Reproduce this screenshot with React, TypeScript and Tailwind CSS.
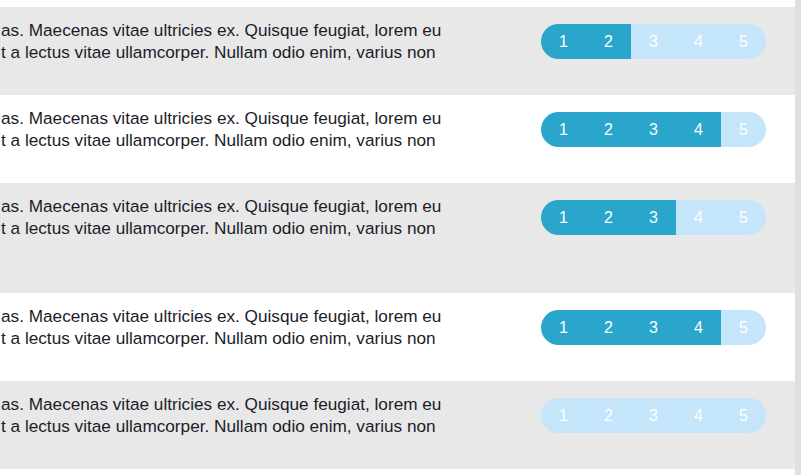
const line1 = 'as. Maecenas vitae ultricies ex. Quisque feugiat, lorem eu';
const line2 = 't a lectus vitae ullamcorper. Nullam odio enim, varius non';

const rows: { score: number; lines: number; shaded: boolean }[] = [
    { score: 2, lines: 2, shaded: true },
    { score: 4, lines: 2, shaded: false },
    { score: 3, lines: 3, shaded: true },
    { score: 4, lines: 2, shaded: false },
    { score: 0, lines: 2, shaded: true },
];

function Rating({ score }: { score: number }) {
    return (
        <div className="flex h-[35px] w-[225px] shrink-0 overflow-hidden rounded-full">
            {[1, 2, 3, 4, 5].map((n) => (
                <span
                    key={n}
                    className={`flex w-[45px] items-center justify-center pt-px text-[16px] text-white ${
                        n <= score ? 'bg-[#2aa5cb]' : 'bg-[#c5e5fa]'
                    }`}
                >
                    {n}
                </span>
            ))}
        </div>
    );
}

export default function App() {
    return (
        <div className="flex h-[475px] w-[801px] overflow-hidden bg-white font-['Liberation_Sans',Arial,sans-serif]">
            <div className="flex w-[795px] flex-col pt-[7px]">
                {rows.map((row, i) => (
                    <div
                        key={i}
                        className={`flex items-start pb-[32px] pt-[12px] ${row.shaded ? 'bg-[#e8e8e8]' : 'bg-white'}`}
                    >
                        <div className="w-[541px] shrink-0 overflow-hidden whitespace-nowrap pl-px text-[17.2px] leading-[22px] text-[#1c1c28]">
                            <p>{line1}</p>
                            <p>{line2}</p>
                            {row.lines > 2 ? <p>&nbsp;</p> : null}
                        </div>
                        <div className="mt-[5px]">
                            <Rating score={row.score} />
                        </div>
                    </div>
                ))}
            </div>
            <div className="w-[6px] shrink-0 bg-[#dde0e5]" />
        </div>
    );
}
